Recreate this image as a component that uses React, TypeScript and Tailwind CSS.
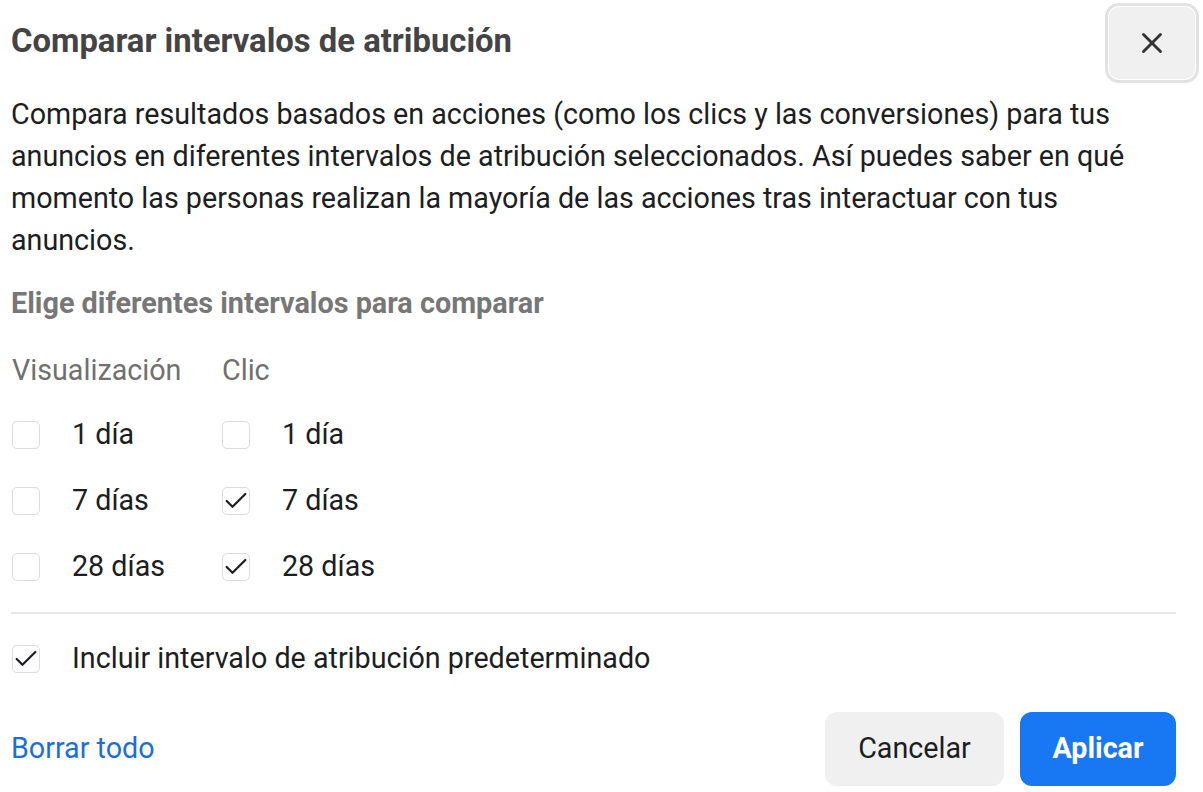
import { X, Check } from 'lucide-react';

function Box({ checked }: { checked?: boolean }) {
  return (
    <span className="flex h-[28px] w-[28px] shrink-0 items-center justify-center overflow-visible rounded-[5px] border-[1.5px] border-[#dcdcdc] bg-white">
      {checked && <Check className="h-[28px] w-[28px] shrink-0 text-[#1c1e21]" strokeWidth={1.9} />}
    </span>
  );
}

function Option({ label, checked }: { label: string; checked?: boolean }) {
  return (
    <div className="flex h-[66px] items-center">
      <Box checked={checked} />
      <span className="ml-[32px] text-[28.7px] text-[#1c1e21]">{label}</span>
    </div>
  );
}

export default function App() {
  return (
    <div className="h-[792px] w-[1203px] overflow-hidden bg-white font-['Roboto',sans-serif]">
      <div className="flex items-start justify-between pl-[11px] pr-[4px] pt-[3px]">
        <h1 className="mt-[18px] text-[32.8px] font-bold leading-[40px] text-[#444444]">
          Comparar intervalos de atribución
        </h1>
        <button className="flex h-[80px] w-[94px] items-center justify-center rounded-[14px] border-[3px] border-[#e2e2e2] bg-[#f0f0f0] ring-1 ring-inset ring-white">
          <X className="h-[34px] w-[34px] text-[#333]" strokeWidth={2} />
        </button>
      </div>

      <div className="pl-[11px] pr-[27px]">
        <p className="mt-[10px] text-[28.7px] leading-[42px] text-[#1c1e21]">
          Compara resultados basados en acciones (como los clics y las conversiones) para tus
          anuncios en diferentes intervalos de atribución seleccionados. Así puedes saber en qué
          momento las personas realizan la mayoría de las acciones tras interactuar con tus
          anuncios.
        </p>

        <h2 className="mt-[22px] text-[28.8px] font-bold leading-[40px] text-[#777777]">
          Elige diferentes intervalos para comparar
        </h2>

        <div className="mt-[23px] flex">
          <div className="w-[211px] pl-[1px]">
            <div className="flex h-[50px] items-center text-[28.7px] text-[#707070]">Visualización</div>
            <div className="pt-[6px]">
              <Option label="1 día" />
              <Option label="7 días" />
              <Option label="28 días" />
            </div>
          </div>
          <div>
            <div className="flex h-[50px] items-center text-[28.7px] text-[#707070]">Clic</div>
            <div className="pt-[6px]">
              <Option label="1 día" />
              <Option label="7 días" checked />
              <Option label="28 días" checked />
            </div>
          </div>
        </div>

        <div className="mt-[12px] border-t-2 border-[#e6e6e6]" />

        <div className="flex h-[90px] items-center pl-[1px]">
          <Box checked />
          <span className="ml-[32px] text-[28.7px] text-[#1c1e21]">
            Incluir intervalo de atribución predeterminado
          </span>
        </div>

        <div className="flex items-center justify-between pt-[8px]">
          <button className="text-[28.7px] text-[#1a6fe0]">Borrar todo</button>
          <div className="flex gap-[16px]">
            <button className="h-[74px] w-[179px] rounded-[12px] bg-[#f0f0f0] text-[28.7px] text-[#1c1e21]">
              Cancelar
            </button>
            <button className="h-[74px] w-[156px] rounded-[12px] bg-[#1877f2] text-[28.7px] font-bold text-white">
              Aplicar
            </button>
          </div>
        </div>
      </div>
    </div>
  );
}
